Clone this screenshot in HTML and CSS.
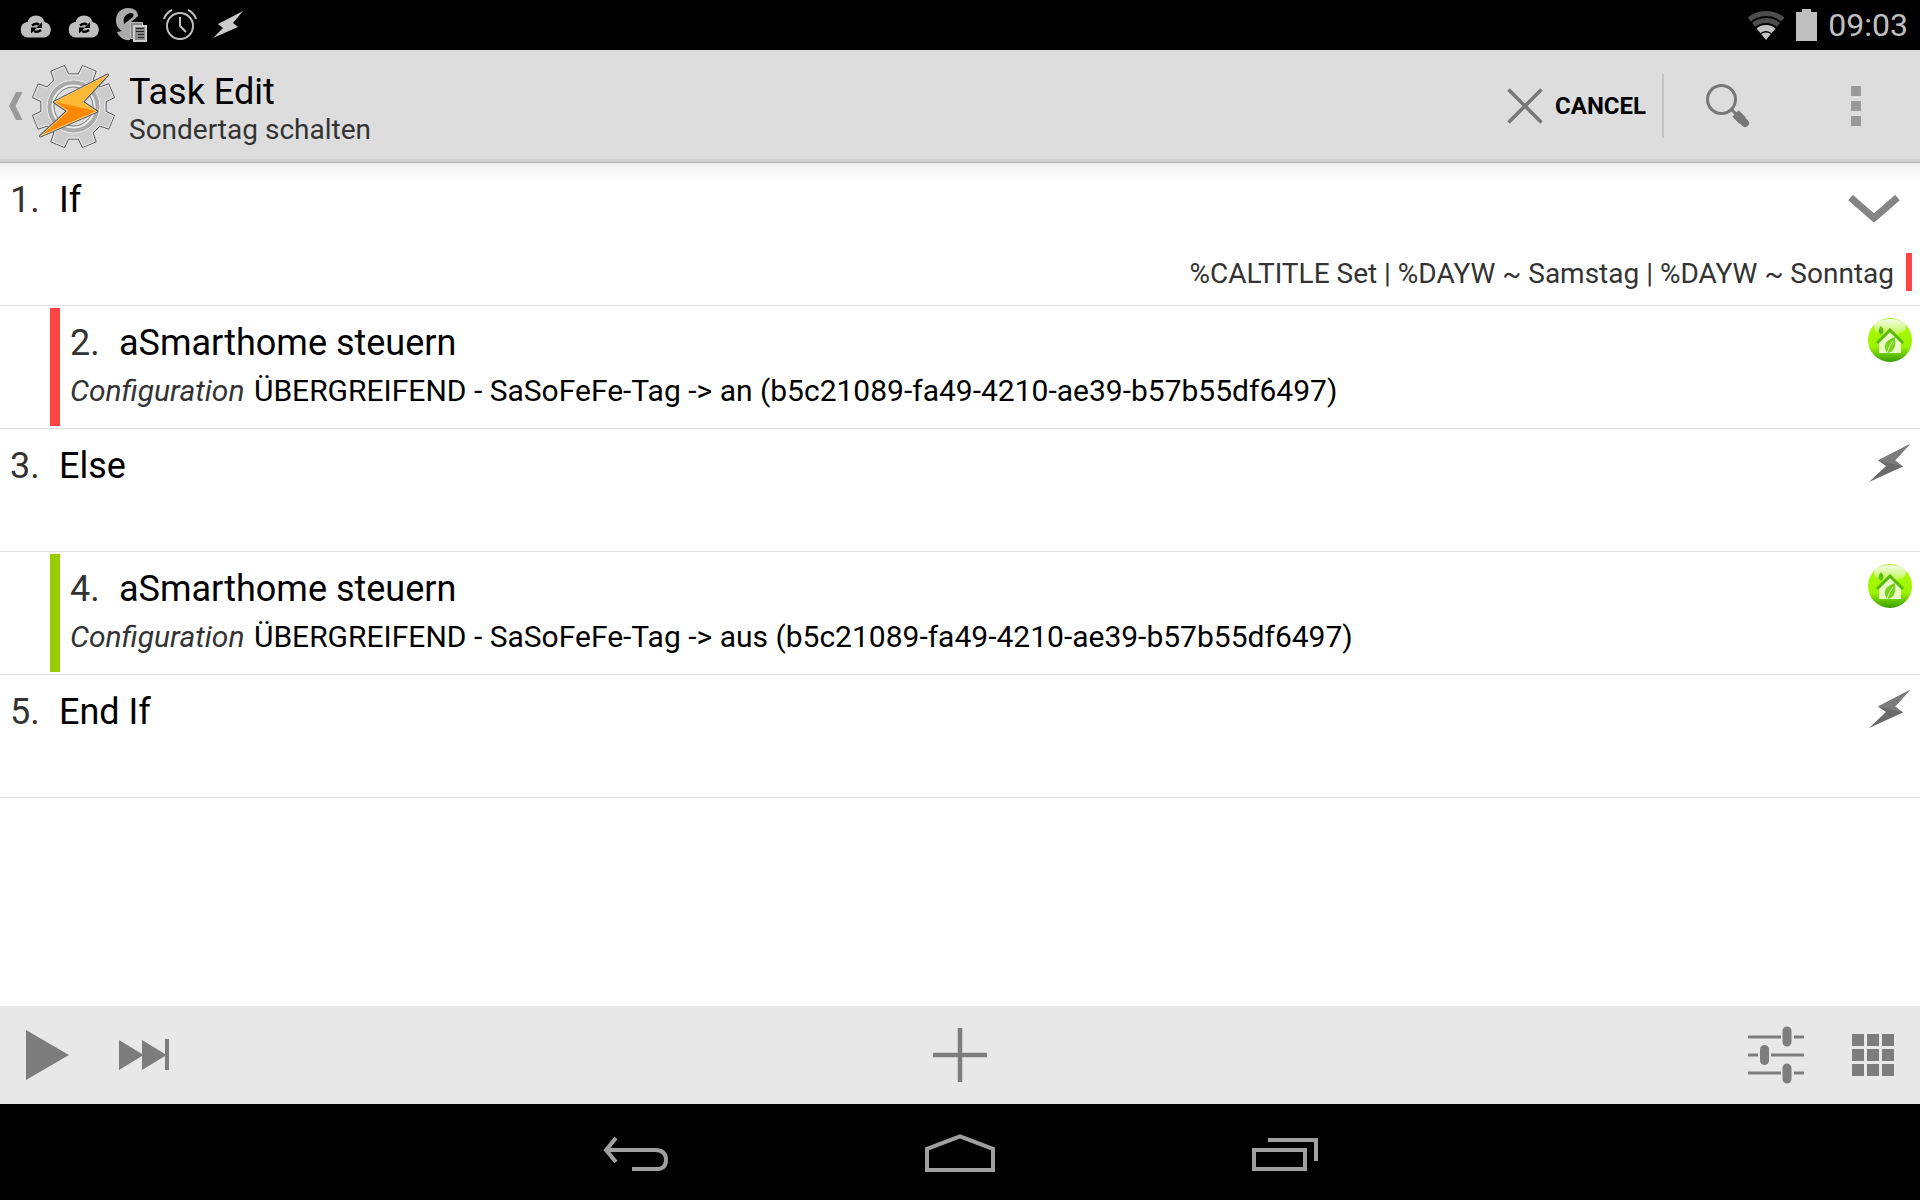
FILE: index.html
```html
<!DOCTYPE html>
<html lang="en">
<head>
  <meta charset="UTF-8">
  <meta name="viewport" content="width=device-width, initial-scale=1">
  <title>Task Edit</title>
  <link rel="stylesheet" href="styles.css">
</head>
<body>

  <div class="status-bar">
    <div class="notifications">
      <svg width="34" height="26" viewBox="0 0 34 26">
        <path fill="#bfbfbf" d="M8 25.500A8 8 0 0 1 7.500 10Q8 10 8.500 10A8.800 8.800 0 0 1 25.500 10A8 8 0 0 1 26 25.500Z"/>
        <path fill="none" stroke="#000" stroke-width="2.500" d="M13 13.500q4-3 7-1M22 18q-4 3-7 1"/>
        <path d="M23 10v6h-6zM12 21.500v-6h6z"/>
      </svg>
      <svg width="34" height="26" viewBox="0 0 34 26">
        <path fill="#bfbfbf" d="M8 25.500A8 8 0 0 1 7.500 10Q8 10 8.500 10A8.800 8.800 0 0 1 25.500 10A8 8 0 0 1 26 25.500Z"/>
        <path fill="none" stroke="#000" stroke-width="2.500" d="M13 13.500q4-3 7-1M22 18q-4 3-7 1"/>
        <path d="M23 10v6h-6zM12 21.500v-6h6z"/>
      </svg>
      <svg width="32" height="34" viewBox="0 0 32 34">
        <path fill="#aaa" d="M12 0C18 0 22 3 22 8L14 15V32C8 33 3 29 1 24L6 23C1 20 0 16 0 12C0 5 5 0 12 0Z"/>
        <path d="M8 16Q6 7 14 5q5 0 3 4z"/>
        <path fill="#888" stroke="#bbb" d="M14.500 14.500h12v16h-12z"/>
        <path fill="#888" stroke="#ccc" stroke-width="2" d="M18 18h12v15h-12z"/>
        <path fill="none" stroke="#222" stroke-width="1" d="M20 20.500h8M20 23.500h8M22 26.500h6M22 29.500h6"/>
      </svg>
      <svg width="34" height="32" viewBox="0 0 34 32" fill="none" stroke="#bfbfbf" stroke-width="2">
        <circle cx="17" cy="17" r="13"/>
        <path d="M17 8v9l6 6M1 10Q3 4 9 1M33 10Q31 4 25 1"/>
      </svg>
      <svg width="32" height="30" viewBox="0 0 32 30">
        <path fill="#ccc" d="M31 1L6 14l5 4L1 28l25-11-5-4z"/>
      </svg>
    </div>
    <div class="system">
      <svg width="38" height="29" viewBox="0 0 38 29">
        <clipPath id="wifi"><path d="M19 29L-4 1V-5H42V1Z"/></clipPath>
        <g clip-path="url(#wifi)" fill="none">
          <circle cx="19" cy="29" r="26.500" stroke="#4d4d4d" stroke-width="5"/>
          <circle cx="19" cy="29" r="19.500" stroke="#4d4d4d" stroke-width="5"/>
          <circle cx="19" cy="29" r="12" stroke="#c4c4c4" stroke-width="6"/>
          <circle cx="19" cy="29" r="7.500" fill="#c4c4c4"/>
        </g>
      </svg>
      <svg width="21" height="32" viewBox="0 0 21 32"><path fill="#bfbfbf" d="M6 0h9v3h6v29H0V3h6z"/></svg>
      <span class="clock">09:03</span>
    </div>
  </div>

  <header class="action-bar">
    <button class="home-up" aria-label="Navigate up">
      <svg width="14" height="28" viewBox="0 0 14 28"><path fill="#999" d="M7 0h6.500L6.500 14l7 14H7L0 14z"/></svg>
      <svg width="85" height="85" viewBox="0 0 85 85">
        <g transform="translate(42.500 42.500)">
          <path fill="#ccc" stroke="#555" d="M4.900-32.600L8.900-41 22.700-35.300 19.600-26.500 26.500-19.600 35.300-22.700 41-8.900 32.600-4.900V4.900L41 8.900 35.300 22.700 26.500 19.600 19.600 26.500 22.700 35.300 8.900 41 4.900 32.600H-4.900L-8.900 41-22.700 35.300-19.600 26.500-26.500 19.600-35.300 22.700-41 8.900-32.600 4.900V-4.900L-41-8.900-35.300-22.700-26.500-19.600-19.600-26.500-22.700-35.300-8.900-41-4.900-32.600Z"/>
          <path fill="none" stroke="#e8e8e8" d="M5.600-31.400L9.600-39.700 21.300-34.800 18.400-26.200 26.200-18.400 34.800-21.300 39.700-9.600 31.400-5.600V5.600L39.700 9.600 34.800 21.300 26.200 18.400 18.400 26.200 21.300 34.800 9.600 39.700 5.600 31.400H-5.600L-9.600 39.700-21.300 34.800-18.400 26.200-26.200 18.400-34.800 21.300-39.700 9.600-31.400 5.600V-5.600L-39.700-9.600-34.800-21.300-26.200-18.400-18.400-26.200-21.300-34.800-9.600-39.700-5.600-31.400Z"/>
          <circle r="26.500" fill="#aaa" stroke="#eee"/>
          <circle r="21" fill="#ddd" stroke="#eee" stroke-width="2"/>
          <circle r="19.500" fill="none" stroke="#777"/>
        </g>
        <path fill="#ff8800" stroke="#555" stroke-width="3" stroke-linejoin="round" d="M76.500 11L23.500 38l13 9L9.500 72 65.500 47.500l-14-9.500z"/>
        <path fill="#ff8800" stroke="#ffdc9b" stroke-linejoin="round" d="M76.500 11L23.500 38l13 9L9.500 72 65.500 47.500l-14-9.500z"/>
        <path fill="#ffb833" d="M75.500 12L24.500 38 65 47.200 51 38z"/>
      </svg>
    </button>
    <div class="titles">
      <h1>Task Edit</h1>
      <p>Sondertag schalten</p>
    </div>
    <div class="actions">
      <button class="cancel">
        <svg width="36" height="36" viewBox="0 0 36 36"><path fill="none" stroke="#777" stroke-width="3.500" d="M1.500 1.500l33 33M34.500 1.500l-33 33"/></svg>
        Cancel
      </button>
      <button class="action" aria-label="Search">
        <svg width="44" height="44" viewBox="0 0 44 44" fill="none" stroke="#777">
          <circle cx="15.500" cy="15.500" r="14" stroke-width="3"/>
          <path stroke-width="3" d="M25.500 25.500l5 5"/>
          <path stroke-width="9" stroke-linejoin="round" d="M29.500 29.500l7 7"/>
          <path stroke-width="8" stroke-linecap="round" d="M33 33l6 6"/>
        </svg>
      </button>
      <button class="action" aria-label="More options">
        <svg width="10" height="40" viewBox="0 0 10 40"><path fill="#999" d="M0 0h10v10H0zM0 15h10v10H0zM0 30h10v10H0z"/></svg>
      </button>
    </div>
  </header>

  <main>
    <ol class="task-list">
      <li class="row row-if">
        <div class="body">
          <h2><span class="num">1.</span>If</h2>
          <p class="condition">%CALTITLE Set | %DAYW ~ Samstag | %DAYW ~ Sonntag</p>
        </div>
        <button class="fold" aria-label="Collapse">
          <svg width="52" height="28" viewBox="0 0 52 28"><path fill="none" stroke="#858585" stroke-width="7" d="M2.500 2.500L26 23 49.500 2.500"/></svg>
        </button>
      </li>
      <li class="row nested nested-if">
        <div class="body">
          <h2><span class="num">2.</span>aSmarthome steuern</h2>
          <p class="config"><em>Configuration</em> ÜBERGREIFEND - SaSoFeFe-Tag -&gt; an (b5c21089-fa49-4210-ae39-b57b55df6497)</p>
        </div>
        <svg class="icon" width="44" height="44" viewBox="0 0 44 44">
          <defs>
            <linearGradient id="green" x2="0" y2="1">
              <stop offset="0" stop-color="#a6e81c"/>
              <stop offset=".3" stop-color="#a4f800"/>
              <stop offset=".65" stop-color="#9cf500"/>
              <stop offset="1" stop-color="#359b00"/>
            </linearGradient>
            <linearGradient id="shine" x2="0" y2="1">
              <stop offset="0" stop-color="#fff" stop-opacity=".9"/>
              <stop offset="1" stop-color="#fff" stop-opacity=".25"/>
            </linearGradient>
          </defs>
          <g id="smarthome">
            <circle cx="22" cy="22" r="22" fill="url(#green)"/>
            <ellipse cx="22" cy="9" rx="16" ry="8" fill="url(#shine)"/>
            <path fill="#e9fbc8" d="M11 24l11-10 11 10v11H11z"/>
            <path fill="none" stroke="#58b80c" stroke-width="3" d="M9 25l13-13 13 13"/>
            <path fill="#62bd13" d="M13 8q-5 5 0 9 5-3 0-9z"/>
            <path fill="#79d31b" d="M27 19q-15 5-8 16 10-1 8-16z"/>
            <path fill="none" stroke="#dff5b5" d="M25 23q-4 5-6 12"/>
          </g>
        </svg>
      </li>
      <li class="row">
        <div class="body">
          <h2><span class="num">3.</span>Else</h2>
        </div>
        <svg class="icon" width="44" height="44" viewBox="0 0 44 44">
          <path fill="#6a6a6a" d="M42 3L10 19.500l8 5.500L1 41 35 25.500 27 19.500z"/>
          <path fill="#7c7c7c" d="M42 3L10 19.500l25 6-8-6z"/>
        </svg>
      </li>
      <li class="row nested nested-else">
        <div class="body">
          <h2><span class="num">4.</span>aSmarthome steuern</h2>
          <p class="config"><em>Configuration</em> ÜBERGREIFEND - SaSoFeFe-Tag -&gt; aus (b5c21089-fa49-4210-ae39-b57b55df6497)</p>
        </div>
        <svg class="icon" width="44" height="44" viewBox="0 0 44 44"><use href="#smarthome"/></svg>
      </li>
      <li class="row">
        <div class="body">
          <h2><span class="num">5.</span>End If</h2>
        </div>
        <svg class="icon" width="44" height="44" viewBox="0 0 44 44">
          <path fill="#6a6a6a" d="M42 3L10 19.500l8 5.500L1 41 35 25.500 27 19.500z"/>
          <path fill="#7c7c7c" d="M42 3L10 19.500l25 6-8-6z"/>
        </svg>
      </li>
    </ol>
  </main>

  <footer class="toolbar">
    <div class="group">
      <button aria-label="Run task">
        <svg width="43" height="50" viewBox="0 0 43 50"><path fill="#7d7d7d" d="M0 0l43 25L0 50z"/></svg>
      </button>
      <button aria-label="Step">
        <svg width="50" height="32" viewBox="0 0 50 32"><path fill="#7d7d7d" d="M0 1l23 14V1l23 14V0h4v31h-4V17L23 31V17L0 31z"/></svg>
      </button>
    </div>
    <button aria-label="Add action">
      <svg width="54" height="54" viewBox="0 0 54 54"><path fill="none" stroke="#7d7d7d" stroke-width="4.500" d="M27 0v54M0 27h54"/></svg>
    </button>
    <div class="group group-end">
      <button aria-label="Task properties">
        <svg width="56" height="58" viewBox="0 0 56 58" stroke="#7d7d7d" fill="none">
          <path stroke-width="3" d="M0 11h33M46 11h10M0 29h10M23 29h33M0 47h33M46 47h10"/>
          <path stroke-width="9" stroke-linecap="round" d="M39 5v11M16.500 23.500v11M39 42v11"/>
        </svg>
      </button>
      <button aria-label="Choose icon">
        <svg width="42" height="42" viewBox="0 0 42 42"><path fill="#7d7d7d" d="M0 0h12v12H0zM15 0h12v12H15zM30 0h12v12H30zM0 15h12v12H0zM15 15h12v12H15zM30 15h12v12H30zM0 30h12v12H0zM15 30h12v12H15zM30 30h12v12H30z"/></svg>
      </button>
    </div>
  </footer>

  <nav class="nav-bar">
    <button aria-label="Back">
      <svg width="66" height="36" viewBox="0 0 66 36" fill="none" stroke="#a0a0a0" stroke-width="4"><path d="M14 3L4 15l10 12M3 15h50q11 0 11 10t-11 9H30"/></svg>
    </button>
    <button aria-label="Home">
      <svg width="70" height="38" viewBox="0 0 70 38" fill="none" stroke="#a0a0a0" stroke-width="4"><path d="M2 36V15L35 2.500 68 15v21z"/></svg>
    </button>
    <button aria-label="Recent apps">
      <svg width="66" height="36" viewBox="0 0 66 36" fill="none" stroke="#a0a0a0" stroke-width="4"><path d="M2 15h51v19H2zM16 5h48v21"/></svg>
    </button>
  </nav>

</body>
</html>
```
FILE: styles.css
```css
* {
  box-sizing: border-box;
}

body {
  display: flex;
  flex-direction: column;
  min-height: 100vh;
  margin: 0;
  background-color: #fff;
  color: #000;
  font-family: Roboto, sans-serif;
  font-size: 28px;
  line-height: 34px;
}

h1, h2, p, ol {
  margin: 0;
  padding: 0;
}

h1, h2 {
  font-size: 36px;
  font-weight: 400;
  line-height: 42px;
}

button {
  display: flex;
  align-items: center;
  justify-content: center;
  padding: 0;
  border: none;
  background: none;
  color: inherit;
  font: inherit;
  cursor: pointer;
}

svg {
  display: block;
  flex: none;
}

/* Status bar */

.status-bar {
  display: flex;
  align-items: center;
  justify-content: space-between;
  height: 50px;
  padding: 0 12px;
  background-color: #000;
}

.notifications {
  display: grid;
  grid-template-columns: repeat(5, 48px);
  align-items: center;
  justify-items: center;
}

.system {
  display: flex;
  align-items: center;
  gap: 11px;
}

.clock {
  color: #bfbfbf;
  font-size: 32px;
}

/* Action bar */

.action-bar {
  display: flex;
  align-items: center;
  height: 113px;
  padding-left: 9px;
  background-color: #ddd;
  border-bottom: 1px solid #b4b4b4;
  box-shadow: inset 0 -3px #d0d0d0;
}

.home-up {
  gap: 8px;
  margin-right: 13px;
}

.titles {
  flex: 1;
  padding-top: 6px;
}

.titles p {
  color: #333;
}

.actions {
  display: flex;
  align-items: center;
}

.cancel {
  gap: 12px;
  height: 64px;
  padding-right: 16px;
  border-right: 2px solid #c4c4c4;
  font-size: 24px;
  font-weight: 700;
  text-transform: uppercase;
}

.action {
  width: 128px;
  height: 64px;
}

/* Action list */

main {
  flex: 1;
  background: linear-gradient(#e9e9e9, #f6f6f6 5px, #fff 20px);
}

.task-list {
  list-style: none;
}

.row {
  display: flex;
  min-height: 123px;
  padding: 0 8px 0 10px;
  border-bottom: 1px solid #e1e1e1;
}

.body {
  flex: 1;
  display: flex;
  flex-direction: column;
  gap: 10px;
  padding-top: 16px;
}

.num {
  display: inline-block;
  width: 49px;
  color: #333;
}

.config {
  font-size: 30px;
}

.config em {
  margin-right: 2px;
  color: #333;
}

.icon {
  margin-top: 12px;
}

.row-if {
  position: relative;
  min-height: 143px;
}

.row-if .body {
  justify-content: space-between;
  padding-bottom: 14px;
}

.condition {
  align-self: flex-end;
  padding: 4px 12px 0 0;
  border-right: 6px solid #f44;
  color: #333;
}

.fold {
  position: absolute;
  top: 32px;
  right: 20px;
}

.nested {
  padding: 2px 8px 2px 50px;
}

.nested .body {
  padding: 14px 0 0 10px;
  border-left: 10px solid #f44;
}

.nested .icon {
  margin-top: 10px;
}

.nested-else .body {
  border-color: #9c0;
}

/* Bottom toolbar */

.toolbar {
  display: grid;
  grid-template-columns: 1fr auto 1fr;
  align-items: center;
  height: 98px;
  padding: 0 26px;
  background-color: #e8e8e8;
}

.group {
  display: flex;
  align-items: center;
  gap: 50px;
}

.group-end {
  gap: 48px;
  justify-content: flex-end;
}

/* System navigation */

.nav-bar {
  display: flex;
  justify-content: center;
  height: 96px;
  padding-top: 2px;
  background-color: #000;
}

.nav-bar button {
  width: 325px;
}
```
